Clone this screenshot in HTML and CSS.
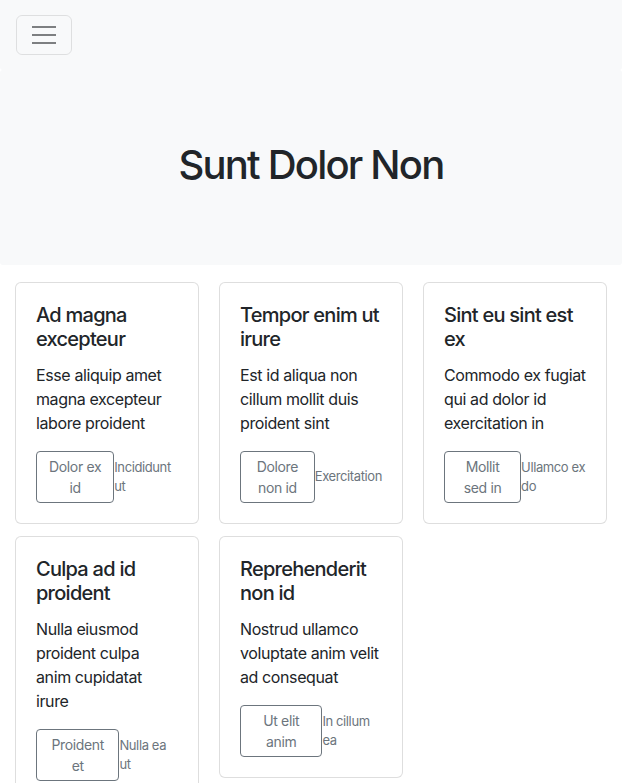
FILE: index.html
```html
<!DOCTYPE html>
<html lang="en">
<head>
<meta charset="utf-8">
<title>Sunt Dolor Non</title>
<link rel="stylesheet" href="styles.css">
</head>
<body>
<nav class="navbar">
  <button class="toggler" type="button" aria-label="Toggle navigation">
    <span class="toggler-icon"><span></span><span></span><span></span></span>
  </button>
</nav>
<header class="hero">
  <h1 class="hero-title">Sunt Dolor Non</h1>
</header>
<main class="cards">
  <div class="card">
    <h5 class="card-title">Ad magna excepteur</h5>
    <p class="card-text">Esse aliquip amet magna excepteur labore proident</p>
    <div class="card-foot">
      <button class="btn" type="button">Dolor ex id</button>
      <small class="muted">Incididunt ut</small>
    </div>
  </div>
  <div class="card">
    <h5 class="card-title">Tempor enim ut irure</h5>
    <p class="card-text">Est id aliqua non cillum mollit duis proident sint</p>
    <div class="card-foot">
      <button class="btn" type="button">Dolore non id</button>
      <small class="muted">Exercitation</small>
    </div>
  </div>
  <div class="card">
    <h5 class="card-title">Sint eu sint est ex</h5>
    <p class="card-text">Commodo ex fugiat qui ad dolor id exercitation in</p>
    <div class="card-foot">
      <button class="btn" type="button">Mollit sed in</button>
      <small class="muted">Ullamco ex do</small>
    </div>
  </div>
  <div class="card">
    <h5 class="card-title">Culpa ad id proident</h5>
    <p class="card-text">Nulla eiusmod proident culpa anim cupidatat irure</p>
    <div class="card-foot">
      <button class="btn" type="button">Proident et</button>
      <small class="muted">Nulla ea ut</small>
    </div>
  </div>
  <div class="card">
    <h5 class="card-title">Reprehenderit non id</h5>
    <p class="card-text">Nostrud ullamco voluptate anim velit ad consequat</p>
    <div class="card-foot">
      <button class="btn" type="button">Ut elit anim</button>
      <small class="muted">In cillum ea</small>
    </div>
  </div>
</main>
</body>
</html>
```
FILE: styles.css
```css
* { box-sizing: border-box; }
body {
  margin: 0;
  font-family: Inter, "Noto Sans", "Liberation Sans", sans-serif;
  font-size: 16px;
  line-height: 1.5;
  letter-spacing: -0.0245em;
  color: #212529;
  background: #fff;
}
.navbar {
  background: #f8f9fa;
  height: 70px;
  padding: 15px 16px;
  border-radius: 0 0 3px 3px;
}
.toggler {
  display: flex;
  align-items: center;
  justify-content: center;
  width: 56px;
  height: 40px;
  padding: 0;
  background: transparent;
  border: 1px solid rgba(0, 0, 0, 0.1);
  border-radius: 6px;
}
.toggler-icon {
  display: flex;
  flex-direction: column;
  gap: 6px;
  width: 24px;
}
.toggler-icon span {
  display: block;
  height: 2px;
  background: #7d7f81;
}
.hero {
  background: #f8f9fa;
  padding: 71px 16px 76px;
  text-align: center;
  border-radius: 3px;
}
.hero-title {
  margin: 0;
  font-size: 40px;
  line-height: 48px;
  font-weight: 500;
  letter-spacing: -0.045em;
  color: #212529;
}
.cards {
  display: grid;
  grid-template-columns: repeat(3, 1fr);
  gap: 12px 20px;
  padding: 17px 15px 0;
  align-items: start;
}
.card {
  border: 1px solid rgba(0, 0, 0, 0.13);
  border-radius: 6px;
  padding: 20px;
  background: #fff;
}
.card-title {
  margin: 0 0 12px;
  font-size: 20px;
  line-height: 24px;
  font-weight: 500;
  letter-spacing: -0.037em;
}
.card-text {
  margin: 0 0 16px;
}
.card-foot {
  display: flex;
  align-items: center;
  justify-content: space-between;
}
.btn {
  font-family: inherit;
  font-size: 14px;
  line-height: 21px;
  letter-spacing: -0.025em;
  padding: 4px 8px;
  color: #6c757d;
  background: transparent;
  border: 1px solid #6c757d;
  border-radius: 4px;
  text-align: center;
}
.muted {
  font-size: 13px;
  line-height: 19.5px;
  letter-spacing: -0.03em;
  color: #6c757d;
}
```
